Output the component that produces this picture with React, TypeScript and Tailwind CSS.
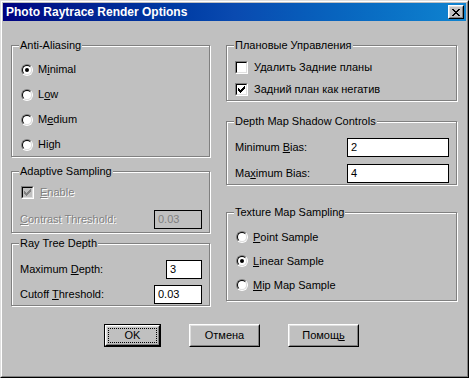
import React from "react";

const CHECK =
  "M6 0h1v1h-1zM5 1h2v1h-2zM0 2h1v1h-1zM4 2h3v1h-3zM0 3h2v1h-2zM3 3h3v1h-3zM0 4h5v1h-5zM1 5h3v1h-3zM2 6h1v1h-1z";
const CROSS =
  "M0 0h2v1h-2zM6 0h2v1h-2zM1 1h2v1h-2zM5 1h2v1h-2zM2 2h4v1h-4zM3 3h2v1h-2zM2 4h4v1h-4zM1 5h2v1h-2zM5 5h2v1h-2zM0 6h2v1h-2zM6 6h2v1h-2z";

const dimText = "text-[#808080] [text-shadow:1px_1px_0_#fff]";

const Group = ({
  title,
  className,
  children,
}: {
  title: string;
  className: string;
  children: React.ReactNode;
}) => (
  <div
    className={`relative border border-[#808080] shadow-[inset_1px_1px_0_#fff,1px_1px_0_#fff] ${className}`}
  >
    <span className="absolute -top-[7px] left-[7px] bg-[#c0c0c0] px-[1px] leading-[13px]">
      {title}
    </span>
    {children}
  </div>
);

const Radio = ({
  checked,
  children,
  h,
}: {
  checked?: boolean;
  children: React.ReactNode;
  h: string;
}) => (
  <div className={`flex items-center ${h}`}>
    <span className="flex w-3 h-3 rounded-full border border-t-[#808080] border-l-[#808080] border-b-white border-r-white">
      <span className="flex flex-1 items-center justify-center rounded-full border border-t-black border-l-black border-b-[#dfdfdf] border-r-[#dfdfdf] bg-white">
        {checked && <span className="w-1 h-1 rounded-full bg-black" />}
      </span>
    </span>
    <span className="ml-[5px]">{children}</span>
  </div>
);

const Check = ({
  checked,
  disabled,
  children,
  h,
}: {
  checked?: boolean;
  disabled?: boolean;
  children: React.ReactNode;
  h: string;
}) => (
  <div className={`flex items-center ${h}`}>
    <span className="flex w-[13px] h-[13px] border border-t-[#808080] border-l-[#808080] border-b-white border-r-white">
      <span
        className={`flex flex-1 items-center justify-center border border-t-black border-l-black border-b-[#dfdfdf] border-r-[#dfdfdf] ${
          disabled ? "bg-[#c0c0c0]" : "bg-white"
        }`}
      >
        {checked && (
          <svg width="7" height="7" viewBox="0 0 7 7" shapeRendering="crispEdges">
            <path d={CHECK} fill={disabled ? "#808080" : "#000"} />
          </svg>
        )}
      </span>
    </span>
    <span className={`ml-[6px] ${disabled ? dimText : ""}`}>{children}</span>
  </div>
);

const Field = ({ value, w, disabled }: { value: string; w: string; disabled?: boolean }) => (
  <div
    className={`flex items-center h-[19px] ${w} border border-black pl-[3px] ${
      disabled ? "bg-[#c0c0c0] text-[#808080]" : "bg-white"
    }`}
  >
    {value}
  </div>
);

const Btn = ({ label, w, def }: { label: React.ReactNode; w: string; def?: boolean }) => {
  const face = (
    <div className="flex flex-1 border border-t-white border-l-white border-b-black border-r-black">
      <div className="flex flex-1 items-center justify-center border border-t-[#dfdfdf] border-l-[#dfdfdf] border-b-[#808080] border-r-[#808080]">
        {def ? (
          <div className="flex flex-1 self-stretch items-center justify-center m-[1px] border border-dotted border-black">
            {label}
          </div>
        ) : (
          label
        )}
      </div>
    </div>
  );
  return (
    <div className={`flex h-[23px] ${w} ${def ? "border border-black" : ""}`}>{face}</div>
  );
};

export default function App() {
  return (
    <div className="w-[469px] h-[378px] bg-[#c0c0c0] font-['Liberation_Sans',Arial,sans-serif] text-[11px] text-black leading-[13px] select-none">
      <div className="flex h-full border border-t-[#dfdfdf] border-l-[#dfdfdf] border-b-black border-r-black">
        <div className="flex flex-1 flex-col p-[1px] border border-t-white border-l-white border-b-[#808080] border-r-[#808080]">
          {/* title bar */}
          <div className="flex h-[18px] items-center justify-between pl-[3px] pr-[2px] bg-gradient-to-r from-[#000080] via-[#0a4ab0] to-[#1084d0]">
            <span className="font-bold text-[12px] text-white">Photo Raytrace Render Options</span>
            <div className="flex w-4 h-[14px] border border-t-white border-l-white border-b-black border-r-black bg-[#c0c0c0]">
              <div className="flex flex-1 items-center justify-center border border-t-[#dfdfdf] border-l-[#dfdfdf] border-b-[#808080] border-r-[#808080]">
                <svg width="8" height="7" viewBox="0 0 8 7" shapeRendering="crispEdges">
                  <path d={CROSS} fill="#000" />
                </svg>
              </div>
            </div>
          </div>

          <div className="flex flex-col pt-[24px] pl-[8px]">
            <div className="flex items-start gap-[16px]">
              {/* left column */}
              <div className="flex flex-col w-[199px]">
                <Group title="Anti-Aliasing" className="h-[112px] pt-[11px] pl-[9px]">
                  <Radio checked h="h-[25px]">
                    M<u>i</u>nimal
                  </Radio>
                  <Radio h="h-[25px]">
                    L<u>o</u>w
                  </Radio>
                  <Radio h="h-[25px]">
                    M<u>e</u>dium
                  </Radio>
                  <Radio h="h-[25px]">High</Radio>
                </Group>

                <Group title="Adaptive Sampling" className="mt-[14px] h-[62px] pt-[10px] pl-[8px] pr-[7px]">
                  <div className="pl-[1px]">
                    <Check checked disabled h="h-[20px]">
                      <u>E</u>nable
                    </Check>
                  </div>
                  <div className="flex items-center justify-between mt-[8px]">
                    <span className={dimText}>
                      <u>C</u>ontrast Threshold:
                    </span>
                    <Field value="0.03" w="w-[48px]" disabled />
                  </div>
                </Group>

                <Group title="Ray Tree Depth" className="mt-[10px] h-[63px] pt-[16px] pl-[8px] pr-[7px]">
                  <div className="flex items-center justify-between">
                    <span>
                      Maximum <u>D</u>epth:
                    </span>
                    <Field value="3" w="w-[36px]" />
                  </div>
                  <div className="flex items-center justify-between mt-[6px]">
                    <span>
                      Cutoff <u>T</u>hreshold:
                    </span>
                    <Field value="0.03" w="w-[48px]" />
                  </div>
                </Group>
              </div>

              {/* right column */}
              <div className="flex flex-col w-[231px]">
                <Group title="Плановые Управления" className="h-[56px] pt-[10px] pl-[8px]">
                  <Check h="h-[22px]">Удалить Задние планы</Check>
                  <Check checked h="h-[22px]">
                    Задний план как негатив
                  </Check>
                </Group>

                <Group title="Depth Map Shadow Controls" className="mt-[20px] h-[64px] pt-[16px] pl-[8px] pr-[7px]">
                  <div className="flex items-center justify-between">
                    <span>
                      Minimum <u>B</u>ias:
                    </span>
                    <Field value="2" w="w-[102px]" />
                  </div>
                  <div className="flex items-center justify-between mt-[7px]">
                    <span>
                      Ma<u>x</u>imum Bias:
                    </span>
                    <Field value="4" w="w-[102px]" />
                  </div>
                </Group>

                <Group title="Texture Map Sampling" className="mt-[27px] h-[89px] pt-[12px] pl-[9px]">
                  <Radio h="h-[24px]">
                    <u>P</u>oint Sample
                  </Radio>
                  <Radio checked h="h-[24px]">
                    <u>L</u>inear Sample
                  </Radio>
                  <Radio h="h-[24px]">
                    <u>M</u>ip Map Sample
                  </Radio>
                </Group>
              </div>
            </div>

            {/* buttons */}
            <div className="flex gap-[28px] mt-[18px] ml-[93px]">
              <Btn label="OK" w="w-[57px]" def />
              <Btn label="Отмена" w="w-[71px]" />
              <Btn
                label={
                  <span>
                    Помощ<u>ь</u>
                  </span>
                }
                w="w-[71px]"
              />
            </div>
          </div>
        </div>
      </div>
    </div>
  );
}
